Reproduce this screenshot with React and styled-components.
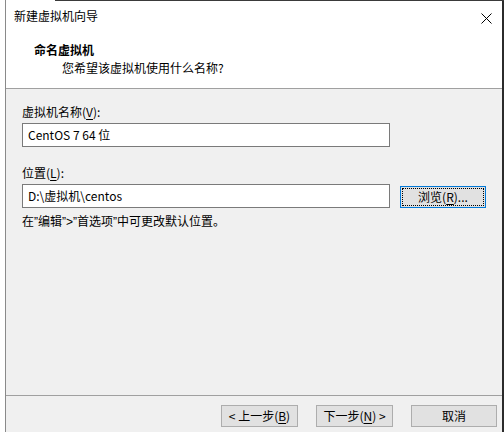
import React from 'react'
import styled, { createGlobalStyle } from 'styled-components'

const Global = createGlobalStyle`
  html, body {
    margin: 0;
    padding: 0;
    background: #ffffff;
  }
  body {
    font-family: "Noto Sans CJK SC", "Microsoft YaHei", sans-serif;
    font-size: 12px;
    color: #000;
  }
`;

const Screen = styled.div`
  position: relative;
  width: 504px;
  height: 432px;
  display: flex;
  padding-left: 5px;
  box-sizing: border-box;
  background: #ffffff;
  overflow: hidden;

  &::before {
    content: "";
    position: absolute;
    top: 0;
    left: 55px;
    right: 0;
    height: 1px;
    background: #3a3a3a;
  }
`;

const Window = styled.div`
  flex: 1;
  display: flex;
  flex-direction: column;
  border-left: 1px solid #8a8a8a;
  border-right: 2px solid #2b2b2b;
`;

const Header = styled.div`
  background: #ffffff;
  height: 88px;
  border-bottom: 1px solid #a0a0a0;
  display: flex;
  flex-direction: column;
`;

const TitleBar = styled.div`
  height: 32px;
  display: flex;
  align-items: center;
  justify-content: space-between;
  padding: 0 8px;
  margin-top: 1px;
`;

const TitleText = styled.span`
  line-height: 16px;
  margin-top: -2px;
`;

const Close = styled.span`
  display: flex;
  margin-right: 2px;
  margin-top: 2px;
`;

const Heading = styled.div`
  font-weight: bold;
  line-height: 16px;
  margin: 9px 0 0 28px;
`;

const SubHeading = styled.div`
  line-height: 16px;
  margin: 2px 0 0 56px;
`;

const Body = styled.div`
  flex: 1;
  background: #f0f0f0;
  padding: 15px 0 0 16px;
  display: flex;
  flex-direction: column;
`;

const Label = styled.div`
  line-height: 16px;
  margin-top: ${(p) => p.top || 0}px;
`;

const Key = styled.span`
  text-decoration: underline;
  text-underline-offset: 2px;
`;

const Row = styled.div`
  display: flex;
  align-items: center;
  margin-top: 3px;
`;

const Input = styled.div`
  width: 368px;
  height: 24px;
  box-sizing: border-box;
  border: 1px solid #7a7a7a;
  background: #ffffff;
  padding-left: 5px;
  display: flex;
  align-items: center;
  line-height: 16px;
`;

const Button = styled.div`
  width: ${(p) => p.w || 77}px;
  height: 22px;
  box-sizing: border-box;
  border: 1px solid ${(p) => (p.focus ? '#0078d7' : '#adadad')};
  background: #e1e1e1;
  display: flex;
  align-items: center;
  justify-content: center;
  position: relative;
  line-height: 16px;

  ${(p) =>
    p.focus &&
    `
    &::after {
      content: "";
      position: absolute;
      inset: 1px;
      border: 1px dotted #000;
    }
  `}
`;

const BrowseWrap = styled.div`
  margin-left: 10px;
  margin-top: 1px;
`;

const Note = styled.div`
  line-height: 16px;
  margin-top: 5px;
`;

const Quote = styled.span`
  font-family: "Liberation Sans", sans-serif;
`;

const Footer = styled.div`
  height: 37px;
  background: #f0f0f0;
  border-top: 1px solid #a0a0a0;
  display: flex;
  justify-content: flex-end;
  align-items: flex-start;
  gap: 18px;
  padding: 9px 5px 0 0;
  box-sizing: border-box;
`;

const CloseIcon = () => (
  <svg width="11" height="11" viewBox="0 0 11 11">
    <path d="M0.5 0.5 L10.5 10.5 M10.5 0.5 L0.5 10.5" stroke="#000" strokeWidth="1" fill="none" />
  </svg>
);

export default function App() {
  return (
    <>
      <Global />
      <Screen>
        <Window>
          <Header>
            <TitleBar>
              <TitleText>新建虚拟机向导</TitleText>
              <Close><CloseIcon /></Close>
            </TitleBar>
            <Heading>命名虚拟机</Heading>
            <SubHeading>您希望该虚拟机使用什么名称?</SubHeading>
          </Header>
          <Body>
            <Label>虚拟机名称(<Key>V</Key>):</Label>
            <Row>
              <Input>CentOS 7 64 位</Input>
            </Row>
            <Label top={18}>位置(<Key>L</Key>):</Label>
            <Row>
              <Input>D:\虚拟机\centos</Input>
              <BrowseWrap>
                <Button w={86} focus>浏览(<Key>R</Key>)...</Button>
              </BrowseWrap>
            </Row>
            <Note>
              在<Quote>”</Quote>编辑<Quote>”&gt;”</Quote>首选项<Quote>”</Quote>中可更改默认位置。
            </Note>
          </Body>
          <Footer>
            <Button>&lt; 上一步(<Key>B</Key>)</Button>
            <Button>下一步(<Key>N</Key>) &gt;</Button>
            <Button w={86}>取消</Button>
          </Footer>
        </Window>
      </Screen>
    </>
  )
}
